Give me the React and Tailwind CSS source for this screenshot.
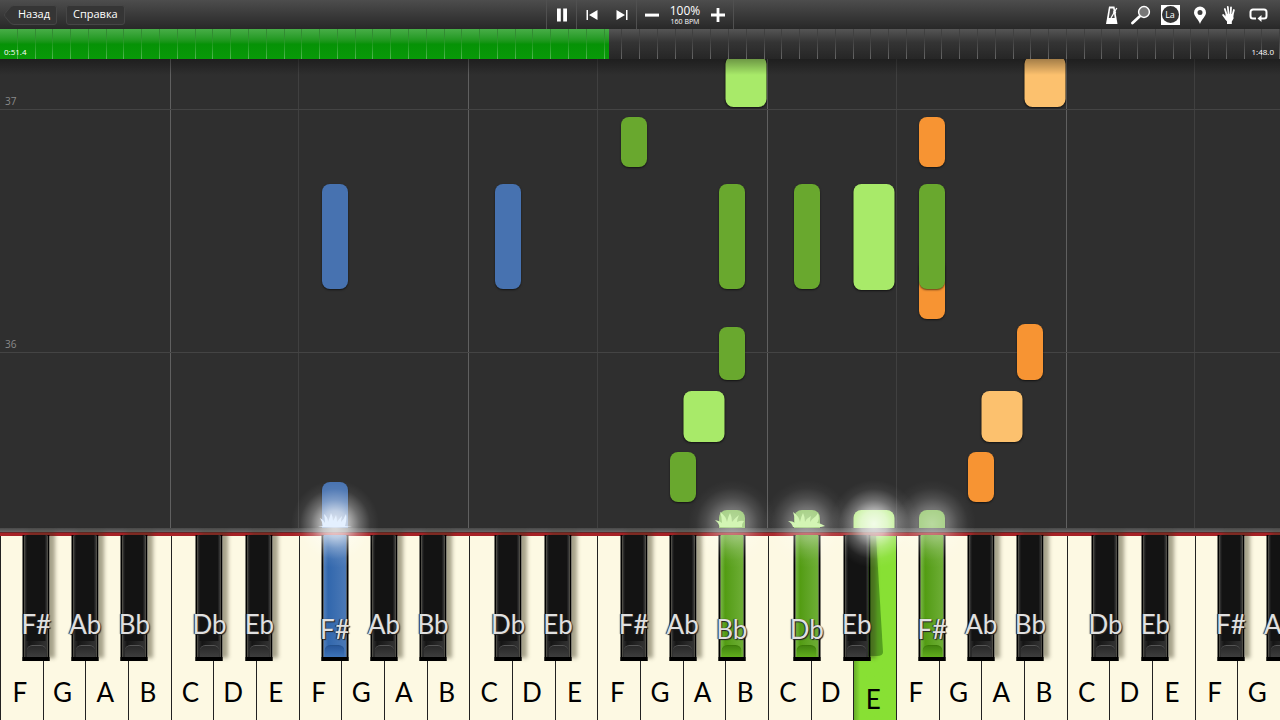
import React, { useState } from 'react';
import clsx from 'clsx';

const WHITE_COUNT = 30;
const BAR_COUNT = 72;
const LETTERS = ['F', 'G', 'A', 'B', 'C', 'D', 'E'];

// centre of each black key, in white key widths from the octave's F
const BLACK_KEYS = [
    { name: 'F#', at: 0.85 },
    { name: 'Ab', at: 2 },
    { name: 'Bb', at: 3.15 },
    { name: 'Db', at: 4.91 },
    { name: 'Eb', at: 6.08 },
];

const NOTE_COLORS = {
    green: 'bg-[#69a82e]',
    lime: 'bg-[#a8ea69]',
    orange: 'bg-[#f79433]',
    peach: 'bg-[#fcc16e]',
    blue: 'bg-[#4772b0]',
    hit: 'bg-[#7fbb50]',
};

// start = distance above the keyboard, length = duration on the roll
const NOTES = [
    { key: 'B', octave: 2, start: 421, length: 51, color: 'lime' },
    { key: 'B', octave: 3, start: 421, length: 51, color: 'peach' },
    { key: 'F#', octave: 2, start: 361, length: 50, color: 'green' },
    { key: 'F#', octave: 3, start: 361, length: 50, color: 'orange' },
    { key: 'F#', octave: 1, start: 239, length: 105, color: 'blue' },
    { key: 'Db', octave: 1, start: 239, length: 105, color: 'blue' },
    { key: 'Bb', octave: 2, start: 239, length: 105, color: 'green' },
    { key: 'Db', octave: 2, start: 239, length: 105, color: 'green' },
    { key: 'E', octave: 2, start: 238, length: 106, color: 'lime' },
    { key: 'F#', octave: 3, start: 209, length: 60, color: 'orange' },
    { key: 'F#', octave: 3, start: 239, length: 105, color: 'green' },
    { key: 'Bb', octave: 2, start: 148, length: 53, color: 'green' },
    { key: 'Bb', octave: 3, start: 148, length: 56, color: 'orange' },
    { key: 'A', octave: 2, start: 86, length: 51, color: 'lime' },
    { key: 'A', octave: 3, start: 86, length: 51, color: 'peach' },
    { key: 'Ab', octave: 2, start: 26, length: 50, color: 'green' },
    { key: 'Ab', octave: 3, start: 26, length: 50, color: 'orange' },
    { key: 'F#', octave: 1, start: -12, length: 58, color: 'blue' },
    { key: 'Bb', octave: 2, start: -12, length: 30, color: 'hit' },
    { key: 'Db', octave: 2, start: -12, length: 30, color: 'hit' },
    { key: 'E', octave: 2, start: -12, length: 30, color: 'lime' },
    { key: 'F#', octave: 3, start: -12, length: 30, color: 'hit' },
];

const PRESSED = {
    'F#1': 'blue',
    'Bb2': 'green',
    'Db2': 'green',
    'E2': 'green',
    'F#3': 'green',
};

const SPARKS = {
    flame: 'M3 18 8 17 Q7 12 5 9 Q9 11 10 14 Q10 9 9 5 Q13 8 13 13 Q15 8 16 4 Q18 8 18 12 Q20 9 21 6 Q22 9 22 13 Q24 10 27 7 Q26 11 26 13 Q29 10 31 5 Q32 10 30 17 L37 18Z',
    tuft: 'M8 18 Q7 14 3 11 Q8 12 10 14 Q10 8 8 3 Q14 7 15 13 Q16 8 18 4 Q20 8 20 13 Q23 9 27 6 Q25 10 25 13 Q29 11 32 12 Q30 14 30 18Z',
    wideTuft: 'M6 18 Q5 14 1 12 Q6 12 8 14 Q8 8 6 3 Q12 7 13 13 Q14 8 16 4 Q18 8 18 13 Q20 9 24 7 Q23 10 23 13 Q26 9 29 7 L31 4 Q33 10 30 14 Q33 14 38 17 L34 18Z',
};

const HITS = [
    { key: 'F#', octave: 1, spark: 'flame', fill: '#e4f0ff', glow: 'strong' },
    { key: 'Bb', octave: 2, spark: 'tuft', fill: '#d3f5b4', glow: 'soft' },
    { key: 'Db', octave: 2, spark: 'wideTuft', fill: '#d3f5b4', glow: 'soft' },
    { key: 'E', octave: 2, glow: 'strong' },
    { key: 'F#', octave: 3, glow: 'soft' },
];

const isBlack = (key) => key.length === 2;

const centerOf = (key, octave) => {
    const offset = isBlack(key)
        ? BLACK_KEYS.find((k) => k.name === key).at
        : LETTERS.indexOf(key) + 0.49;
    return `${((octave * 7 + offset) / WHITE_COUNT) * 100}%`;
};

const ToolButton = ({ label, onClick, className, children }) => (
    <button
        type="button"
        aria-label={label}
        onClick={onClick}
        className={clsx('flex h-full items-center justify-center', className)}
    >
        {children}
    </button>
);

const Toolbar = () => {
    const [playing, setPlaying] = useState(true);

    return (
        <header className="grid h-[29px] shrink-0 grid-cols-[1fr_auto_1fr] items-center bg-linear-to-b from-[#4d4d4d] to-[#282828] text-white">
            <nav className="flex items-center gap-[10px] pl-[4px] text-[11px] font-medium">
                <button type="button" className="relative h-5 w-[52px] pl-[8px] text-center">
                    <svg className="absolute inset-0" width="53" height="20" viewBox="0 0 53 20" fill="#353535" stroke="#464646">
                        <path d="M10 .5H50a2.500 2.500 0 0 1 2.500 2.500V17a2.500 2.500 0 0 1-2.500 2.500H10Q7 19.500 5.500 17L1 11.500Q0 10 1 8.500L5.500 3Q7 .5 10 .5Z" />
                    </svg>
                    <span className="relative">Назад</span>
                </button>
                <button type="button" className="h-5 rounded-[3px] border border-[#464646] bg-[#353535] px-[6px]">
                    Справка
                </button>
            </nav>

            <div className="flex h-[29px] items-center">
                <ToolButton label="Pause" onClick={() => setPlaying(!playing)} className="w-[31px] border-x border-[#505050]">
                    <svg width="12" height="14" viewBox="0 0 12 14" fill="#fff">
                        {playing ? <path d="M1 .5h3.800v13H1zM7.200 .5H11v13H7.200z" /> : <path d="M1 .5 11 7 1 13.500z" />}
                    </svg>
                </ToolButton>
                <ToolButton label="Previous bar" className="w-[30px]">
                    <svg width="12" height="10" viewBox="0 0 12 10" fill="#fff">
                        <path d="M.5 0H2v10H.5zM11.500 0v10L3 5z" />
                    </svg>
                </ToolButton>
                <ToolButton label="Next bar" className="w-[30px] border-r border-[#505050]">
                    <svg width="12" height="10" viewBox="0 0 12 10" fill="#fff">
                        <path d="M10 0h1.500v10H10zM.5 0v10L9 5z" />
                    </svg>
                </ToolButton>
                <ToolButton label="Slower" className="w-[30px]">
                    <svg width="14" height="14" viewBox="0 0 14 14" fill="#fff">
                        <path d="M0 5.600h14v3H0z" />
                    </svg>
                </ToolButton>
                <div className="flex w-[36px] flex-col items-center">
                    <span className="text-[12px] leading-[13px]">100%</span>
                    <span className="text-[7px] leading-[9px] whitespace-nowrap">160 BPM</span>
                </div>
                <ToolButton label="Faster" className="w-[31px] border-r border-[#505050]">
                    <svg width="14" height="14" viewBox="0 0 14 14" fill="#fff">
                        <path d="M0 5.600h5.600V0h2.800v5.600H14v2.800H8.400V14H5.600V8.400H0z" />
                    </svg>
                </ToolButton>
            </div>

            <div className="flex h-[29px] items-center justify-end pr-[7px]">
                <ToolButton label="Metronome" className="w-[29px]">
                    <svg width="14" height="20" viewBox="0 0 14 20">
                        <path d="M4 1.500h5.500L12.500 19H1z" fill="#fff" />
                        <path d="M5.200 3.500h3l1.500 9.500H3.800z" fill="#484848" />
                        <path d="M6 13 11.800 3" stroke="#fff" strokeWidth="1.300" />
                        <path d="m8.300 6.500 2.500 1.400" stroke="#fff" strokeWidth="1.800" />
                    </svg>
                </ToolButton>
                <ToolButton label="Zoom" className="w-[29px]">
                    <svg width="20" height="20" viewBox="0 0 20 20">
                        <path d="m8.500 11.500-7 6.500" stroke="#fff" strokeWidth="2.800" strokeLinecap="round" />
                        <circle cx="13" cy="7" r="5.400" fill="#777" stroke="#fff" strokeWidth="1.500" />
                    </svg>
                </ToolButton>
                <ToolButton label="Note names" className="w-[30px]">
                    <span className="flex h-5 w-[19px] items-center justify-center bg-white">
                        <span className="flex size-[17px] items-center justify-center rounded-full bg-[#333] text-[9px]">La</span>
                    </span>
                </ToolButton>
                <ToolButton label="Bookmarks" className="w-[29px]">
                    <svg width="14" height="18" viewBox="0 0 14 18">
                        <path fillRule="evenodd" d="M7 .5a6 6 0 0 1 6 6C13 10.500 8.500 13 7 18 5.500 13 1 10.500 1 6.500a6 6 0 0 1 6-6ZM7 4a2.500 2.500 0 1 0 0 5 2.500 2.500 0 0 0 0-5Z" fill="#fff" />
                    </svg>
                </ToolButton>
                <ToolButton label="Hands" className="w-[30px]">
                    <svg width="16" height="20" viewBox="0 0 16 20" fill="none" stroke="#fff" strokeLinecap="round">
                        <path d="M5.800 10 3.800 4M7.600 9.500 6.800 2M9.600 9.500l.4-7M11.400 10.500l1.500-5.500" strokeWidth="1.800" />
                        <path d="M5.500 14.500 2.200 10" strokeWidth="2" />
                        <path d="M4.800 9 12.200 9l.4 4.500-1.800 3V19H6v-2.500L3.800 13z" fill="#fff" stroke="none" />
                    </svg>
                </ToolButton>
                <ToolButton label="Loop" className="w-[29px]">
                    <svg width="19" height="15" viewBox="0 0 19 15">
                        <path d="M7 11.500H4A2.500 2.500 0 0 1 1.500 9V5A2.500 2.500 0 0 1 4 2.500h11A2.500 2.500 0 0 1 17.500 5v4a2.500 2.500 0 0 1-2.500 2.500h-3" fill="none" stroke="#fff" strokeWidth="2" />
                        <path d="M8.500 11.500 12.500 8v7z" fill="#fff" />
                    </svg>
                </ToolButton>
            </div>
        </header>
    );
};

const Timeline = ({ percent }) => (
    <div
        role="progressbar"
        aria-label="Song position"
        aria-valuenow={Math.round(percent)}
        className="relative flex h-[30px] shrink-0 items-end justify-between bg-linear-to-b from-[#555] via-[#343434] via-45% to-[#262626] px-1 text-[8px] text-white"
    >
        <div
            className="absolute inset-y-0 left-0 bg-linear-to-b from-[#47ad47] via-[#069206] via-50% to-[#089a08]"
            style={{ width: `${percent}%` }}
        />
        <div className="absolute inset-0 flex">
            {Array.from({ length: BAR_COUNT }, (_, i) => (
                <span key={i} className="flex flex-1 justify-end">
                    <span className="w-px bg-linear-to-b from-black/20 via-white/10 to-white/30" />
                </span>
            ))}
        </div>
        <span className="relative leading-[14px]">0:51.4</span>
        <span className="relative pr-[2px] leading-[14px]">1:48.0</span>
    </div>
);

const BarLine = ({ number, y }) => (
    <div className="absolute inset-x-0 border-b border-[#444] pl-[5px] text-[10px] leading-[16px] text-[#8a8a8a]" style={{ bottom: y }}>
        {number}
    </div>
);

const Roll = () => (
    <main className="relative min-h-0 flex-1 overflow-hidden bg-[#2f2f2f]">
        <div className="absolute inset-0 flex">
            {Array.from({ length: WHITE_COUNT }, (_, i) => (
                <div
                    key={i}
                    className={clsx(
                        'flex-1',
                        i % 7 === 4 && 'border-l border-[#606060]',
                        i % 7 === 0 && i > 0 && 'border-l border-[#404040]'
                    )}
                />
            ))}
        </div>
        <BarLine number={37} y={418} />
        <BarLine number={36} y={175} />
        {NOTES.map((note, i) => (
            <div
                key={i}
                className={clsx(
                    'absolute -translate-x-1/2 rounded-[8px] shadow-[0_1px_2px_rgba(0,0,0,0.6)]',
                    isBlack(note.key) ? 'w-[26px]' : 'w-[41px]',
                    NOTE_COLORS[note.color]
                )}
                style={{ left: centerOf(note.key, note.octave), bottom: note.start, height: note.length }}
            />
        ))}
        <div className="absolute inset-x-0 top-0 h-4 bg-linear-to-b from-black/35 to-transparent" />
    </main>
);

const WhiteKey = ({ name, pressed }) => (
    <button
        type="button"
        className={clsx(
            'flex min-w-0 flex-1 items-end justify-center border-l border-[#222] pr-[4px] text-[26px] leading-[32px] text-black',
            pressed ? 'bg-linear-to-r from-[#68ad2a] via-[#88e034] via-15% to-[#88e034] pb-[5px]' : 'bg-[#fdf9e3] pb-[12px]'
        )}
    >
        {name}
    </button>
);

const BlackKey = ({ name, octave }) => {
    const pressed = PRESSED[name + octave];
    return (
        <button
            type="button"
            className={clsx(
                'absolute -top-px flex h-[126px] w-[27px] -translate-x-1/2 flex-col items-center justify-end border-x-2 border-b-4 border-black px-px text-[26px] leading-[32px] text-[#e0e0e0]',
                !pressed && 'bg-linear-to-r from-[#343434] via-[#151515] via-20% to-[#343434] shadow-[5px_-3px_4px_rgba(60,55,30,0.45)]',
                pressed === 'blue' && 'bg-linear-to-r from-[#5280bc] via-[#3167ad] via-20% to-[#4b79b6]',
                pressed === 'green' && 'bg-linear-to-r from-[#78b842] via-[#539c12] via-20% to-[#6eae35]'
            )}
            style={{ left: centerOf(name, octave) }}
        >
            {!pressed && <span className="absolute inset-x-[2px] top-0 bottom-4 bg-[#131313]" />}
            <span
                className={clsx(
                    'relative z-10 whitespace-nowrap',
                    '[text-shadow:-1px_0_1px_#222,1px_1px_1px_#222]',
                    pressed ? 'mb-0' : 'mb-[5px]'
                )}
            >
                {name}
            </span>
            <span
                className={clsx(
                    'relative h-[12px] w-[20px] shrink-0 rounded-t-[6px] border-t',
                    !pressed && 'border-[#555] bg-linear-to-b from-[#292929] to-[#3d3d3d]',
                    pressed === 'blue' && 'border-[#24528f] bg-linear-to-b from-[#28579a] to-[#3e74b8]',
                    pressed === 'green' && 'border-[#3c7c08] bg-linear-to-b from-[#438510] to-[#60ad1c]'
                )}
            />
        </button>
    );
};

const Hit = ({ hit }) => (
    <div
        className="pointer-events-none absolute -top-[56px] z-20 h-[88px] w-[88px] -translate-x-1/2"
        style={{ left: centerOf(hit.key, hit.octave) }}
    >
        <div
            className={clsx(
                'absolute inset-0',
                hit.glow === 'strong'
                    ? 'bg-[radial-gradient(closest-side,rgba(255,255,255,0.85),rgba(255,255,255,0.65)_30%,rgba(255,255,255,0.3)_55%,rgba(255,255,255,0.06)_80%,transparent)]'
                    : 'bg-[radial-gradient(closest-side,rgba(255,255,255,0.45),rgba(255,255,255,0.32)_35%,rgba(255,255,255,0.14)_60%,rgba(255,255,255,0.03)_82%,transparent)]'
            )}
        />
        {hit.spark && (
            <svg className="absolute top-[29px] left-[24px]" width="40" height="18" viewBox="0 0 40 18" fill={hit.fill}>
                <path d={SPARKS[hit.spark]} />
            </svg>
        )}
    </div>
);

const Keyboard = () => (
    <section aria-label="Keyboard" className="shrink-0">
        <div className="h-[4px] bg-linear-to-b from-[#484848] to-[#686868]" />
        <div className="h-[4px] border-t border-[#6b2426] bg-[#a62226]" />
        <div className="relative">
            <div className="flex h-[184px]">
                {Array.from({ length: WHITE_COUNT }, (_, i) => {
                    const name = LETTERS[i % 7];
                    return <WhiteKey key={i} name={name} pressed={Boolean(PRESSED[name + Math.floor(i / 7)])} />;
                })}
            </div>
            {/* clip horizontally only, the last key runs off the edge */}
            <div className="absolute inset-x-0 -top-px bottom-0 overflow-x-clip">
                <div className="relative top-px">
                    {/* shadow thrown across the lowered E */}
                    <svg
                        className="absolute top-0"
                        style={{ left: centerOf('Eb', 2) }}
                        width="28"
                        height="124"
                        viewBox="0 0 28 124"
                        fill="#55a020"
                    >
                        <path d="M8 0h11l7 116q0 4-6 4H8z" />
                    </svg>
                    {Array.from({ length: 5 }, (_, octave) =>
                        BLACK_KEYS.filter((k) => octave * 7 + k.at < WHITE_COUNT + 0.5).map((k) => (
                            <BlackKey key={k.name + octave} name={k.name} octave={octave} />
                        ))
                    )}
                </div>
            </div>
            {HITS.map((hit) => (
                <Hit key={hit.key + hit.octave} hit={hit} />
            ))}
        </div>
    </section>
);

const App = () => {
    return (
        <div className="flex h-screen flex-col overflow-hidden bg-[#2f2f2f] font-[family-name:'Open_Sans','Noto_Sans',sans-serif] select-none">
            <Toolbar />
            <Timeline percent={47.6} />
            <Roll />
            <div className="shrink-0 font-[family-name:Lato,'Open_Sans',sans-serif]">
                <Keyboard />
            </div>
        </div>
    );
};

export default App;
